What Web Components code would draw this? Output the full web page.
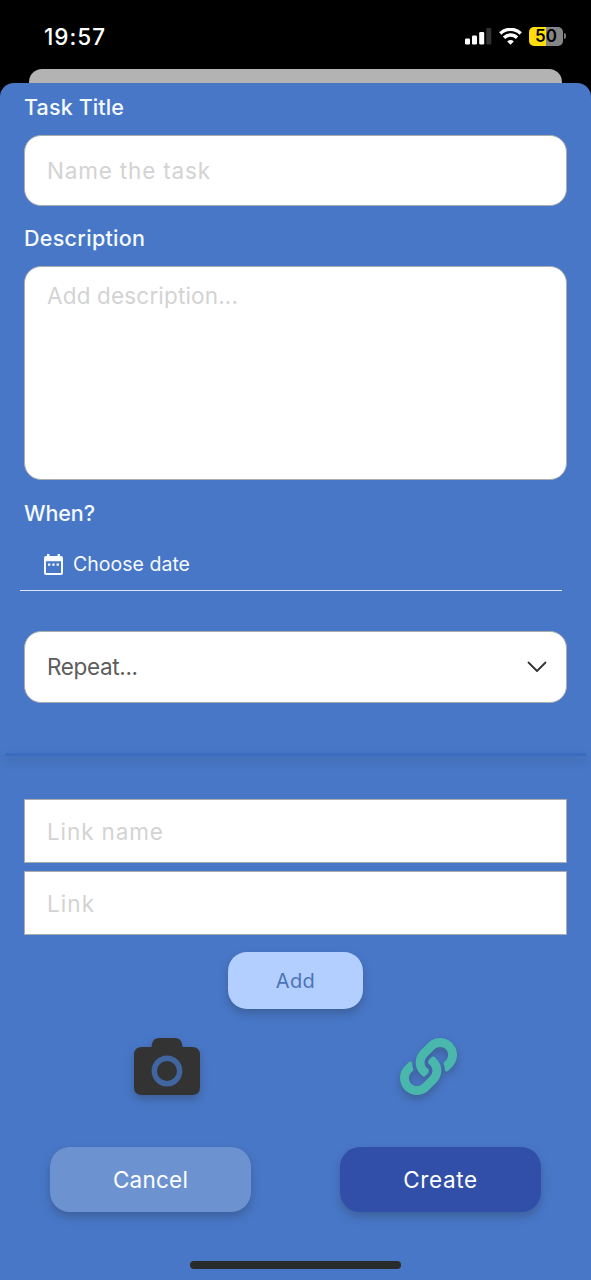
<!DOCTYPE html>
<html lang="en">
<head>
<meta charset="utf-8">
<meta name="viewport" content="width=device-width">
<title>New task</title>
<style>
body{margin:0;background:#000;font-family:Inter,"Liberation Sans",sans-serif}
</style>
</head>
<body>
<task-screen></task-screen>
<script>
const define=(name,html,setup)=>{
  const t=document.createElement('template');
  t.innerHTML=html;
  customElements.define(name,class extends HTMLElement{
    connectedCallback(){
      if(this.shadowRoot)return;
      this.attachShadow({mode:'open'}).append(t.content.cloneNode(true));
      if(setup)setup(this);
    }
  });
};

/* Text tracked out to a given measure, in pixels */
define('tracked-text',`<style>:host{display:inline-block;white-space:nowrap}span{display:inline-block}</style><span><slot></slot></span>`,el=>{
  const s=el.shadowRoot.querySelector('span');
  const w=s.getBoundingClientRect().width,n=el.textContent.length-1;
  s.style.letterSpacing=((+el.getAttribute('measure')-w)/n).toFixed(3)+'px';
});

define('status-bar',`<style>
:host{display:flex;height:69px;box-sizing:border-box;align-items:center;justify-content:space-between;padding:3px 25px 0 44px;color:#fff}
.time{font-size:22.500px;font-weight:500}
.icons{display:flex;align-items:center;gap:7px}
.battery{display:flex;align-items:center;gap:1px}
.cell{width:34px;height:19px;border-radius:5px;background:linear-gradient(90deg,#ffdd0a 50%,#858585 50%);color:#000;font-size:17px;font-weight:600;line-height:19px;text-align:center}
.cap{width:2px;height:6px;border-radius:0 2px 2px 0;background:#777}
svg{display:block}
</style>
<tracked-text class="time" measure="61">19:57</tracked-text>
<div class="icons">
<svg width="27" height="17" viewBox="0 0 27 17" fill="#fff"><rect y="10.500" width="5" height="6" rx="1.300"/><rect x="7" y="7.500" width="5" height="9" rx="1.300"/><rect x="14.200" y="4" width="5" height="12.500" rx="1.300"/><rect x="21.300" y="0" width="5" height="16.500" rx="1.300" fill="#333"/></svg>
<svg width="23" height="17" viewBox="0 0 23 17" fill="none" stroke="#fff" stroke-width="3.400"><path d="M1.300 5.500a14.600 14.600 0 0 1 20.400 0"/><path d="M5 9.700a9.200 9.200 0 0 1 13 0"/><path d="M11.500 16.700l-3.300-3.300a4.700 4.700 0 0 1 6.600 0z" fill="#fff" stroke="none"/></svg>
<div class="battery"><div class="cell">50</div><div class="cap"></div></div>
</div>`);

define('field-label',`<style>
:host{display:flex;align-items:center;padding-left:24px;color:#f4faff;font-size:21.500px;font-weight:500}
</style><slot></slot>`);

define('text-field',`<style>
:host{display:flex;align-items:center;box-sizing:border-box;margin:0 24px;height:var(--h,71px);padding:0 19px 0 22px;background:#fff;border:1.500px solid #a9adb0;border-radius:var(--r,17px);color:#d3d3d3;font-size:22.500px}
:host([tall]){align-items:flex-start;padding-top:15px}
:host([select]){justify-content:space-between;color:#5c5c5c;font-weight:400;padding-bottom:1px}
</style><slot></slot>`);

define('date-row',`<style>
:host{display:flex;box-sizing:border-box;height:51px;margin:0 29px 0 20px;padding:0 0 2px 24px;align-items:center;gap:10px;border-bottom:1.500px solid #dce6f5;color:#f4faff;font-size:19.500px}
svg{display:block}
</style>
<svg width="19" height="21" viewBox="0 0 19 21"><path fill="#f4faff" fill-rule="evenodd" d="M3 0h2.400v2h8.200V0H16v2h1a2 2 0 0 1 2 2v15a2 2 0 0 1-2 2H2a2 2 0 0 1-2-2V4a2 2 0 0 1 2-2h1zM2 7.200V19h15V7.200z"/><path fill="#f4faff" d="M4 9.500h2.300v2.300H4zM8.300 9.500h2.300v2.300H8.300zM12.600 9.500h2.300v2.300h-2.300z"/></svg>
<slot></slot>`);

define('section-divider',`<style>
:host{display:block;height:3px;margin:0 5px;background:#396cbe;box-shadow:0 5px 9px rgba(55,75,105,.4)}
</style>`);

define('action-button',`<style>
:host{display:flex;box-sizing:border-box;align-items:center;justify-content:center;width:201px;height:65px;border-radius:20px;background:#6c92d0;color:#fff;font-size:22.500px;box-shadow:0 5px 8px rgba(45,60,85,.36)}
:host([kind=primary]){background:#314fa8}
:host([kind=small]){width:135px;height:57px;border-radius:19px;background:#b3cfff;color:#4b74b9;font-size:20px}
</style><slot></slot>`);

define('attach-icons',`<style>
:host{display:flex;justify-content:space-between;padding:0 134px}
svg{display:block;overflow:visible;filter:drop-shadow(0 4px 4px rgba(45,55,75,.4))}
</style>
<svg width="66" height="57" viewBox="0 0 66 57"><path fill="#333" d="M8 9h9.500l.5-3Q19 0 25 0h16q6 0 7 6l.5 3H58q8 0 8 8v32q0 8-8 8H8q-8 0-8-8V17q0-8 8-8z"/><circle cx="33" cy="33" r="12.700" fill="none" stroke="#41659f" stroke-width="5.400"/></svg>
<svg width="57" height="57" viewBox="0 0 512 512"><path fill="#4ab7ad" d="M326.612 185.391c59.747 59.809 58.927 155.698.36 214.590-.11.12-.24.25-.36.37l-67.200 67.200c-59.270 59.270-155.699 59.262-214.960 0-59.270-59.260-59.270-155.700 0-214.960l37.106-37.106c9.840-9.840 26.786-3.300 27.294 10.606.648 17.722 3.826 35.527 9.690 52.721 1.986 5.822.567 12.262-3.783 16.612l-13.087 13.087c-28.026 28.026-28.905 73.660-1.155 101.960 28.024 28.579 74.086 28.749 102.325.51l67.200-67.190c28.191-28.191 28.073-73.757 0-101.830-3.701-3.694-7.429-6.564-10.341-8.569a16.037 16.037 0 0 1-6.947-12.606c-.396-10.567 3.348-21.456 11.698-29.806l21.054-21.055c5.521-5.521 14.182-6.199 20.584-1.731a152.482 152.482 0 0 1 20.522 17.197zM467.547 44.449c-59.261-59.262-155.690-59.270-214.960 0l-67.200 67.200c-.12.12-.25.25-.36.37-58.566 58.892-59.387 154.781.36 214.590a152.454 152.454 0 0 0 20.521 17.196c6.402 4.468 15.064 3.789 20.584-1.731l21.054-21.055c8.350-8.350 12.094-19.239 11.698-29.806a16.037 16.037 0 0 0-6.947-12.606c-2.912-2.005-6.640-4.875-10.341-8.569-28.073-28.073-28.191-73.639 0-101.830l67.200-67.190c28.239-28.239 74.300-28.069 102.325.51 27.750 28.300 26.872 73.934-1.155 101.960l-13.087 13.087c-4.350 4.350-5.769 10.790-3.783 16.612 5.864 17.194 9.042 34.999 9.690 52.721.509 13.906 17.454 20.446 27.294 10.606l37.106-37.106c59.271-59.259 59.271-155.699.001-214.959z"/></svg>`);

define('task-screen',`<style>
:host{display:flex;flex-direction:column;height:1280px;background:#000;overflow:hidden}
.behind{height:14px;margin:0 29px;background:#b3b3b3;border-radius:13px 13px 0 0;flex:none}
.sheet{display:flex;flex-direction:column;flex:1;background:#4877c7;border-radius:14px 14px 0 0}
.sheet>*{flex:none}
.l1{height:52px;box-sizing:border-box;padding-bottom:5px}
.l2{height:60px;box-sizing:border-box;padding-top:4px}
.l3{height:60px;box-sizing:border-box;padding-top:5px}
.desc{--h:214px}
.sel{--h:72px;margin-top:40px}
.link{--h:64px;--r:0}
section-divider{margin-top:50px}
.link1{margin-top:43px}
.link2{margin-top:8px}
.add{align-self:center;margin-top:17px}
attach-icons{margin-top:29px}
.actions{display:flex;justify-content:space-between;padding:0 50px;margin-top:52px}
.home{width:211px;height:8px;border-radius:4px;background:#292b2b;align-self:center;margin-top:49px}
</style>
<status-bar></status-bar>
<div class="behind"></div>
<div class="sheet">
<field-label class="l1"><tracked-text measure="100">Task Title</tracked-text></field-label>
<text-field><tracked-text measure="163">Name the task</tracked-text></text-field>
<field-label class="l2"><tracked-text measure="121">Description</tracked-text></field-label>
<text-field tall class="desc"><tracked-text measure="191">Add description...</tracked-text></text-field>
<field-label class="l3"><tracked-text measure="71">When?</tracked-text></field-label>
<date-row><tracked-text measure="117">Choose date</tracked-text></date-row>
<text-field select class="sel"><tracked-text measure="91">Repeat...</tracked-text><svg width="20" height="12" viewBox="0 0 20 12" fill="none" stroke="#333" stroke-width="1.800" stroke-linecap="round" stroke-linejoin="round"><path d="M1.500 1.500L10 10l8.500-8.500"/></svg></text-field>
<section-divider></section-divider>
<text-field class="link link1"><tracked-text measure="116">Link name</tracked-text></text-field>
<text-field class="link link2"><tracked-text measure="47">Link</tracked-text></text-field>
<action-button class="add" kind="small"><tracked-text measure="39">Add</tracked-text></action-button>
<attach-icons></attach-icons>
<div class="actions"><action-button><tracked-text measure="75">Cancel</tracked-text></action-button><action-button kind="primary"><tracked-text measure="74">Create</tracked-text></action-button></div>
<div class="home"></div>
</div>`);
</script>
</body>
</html>
